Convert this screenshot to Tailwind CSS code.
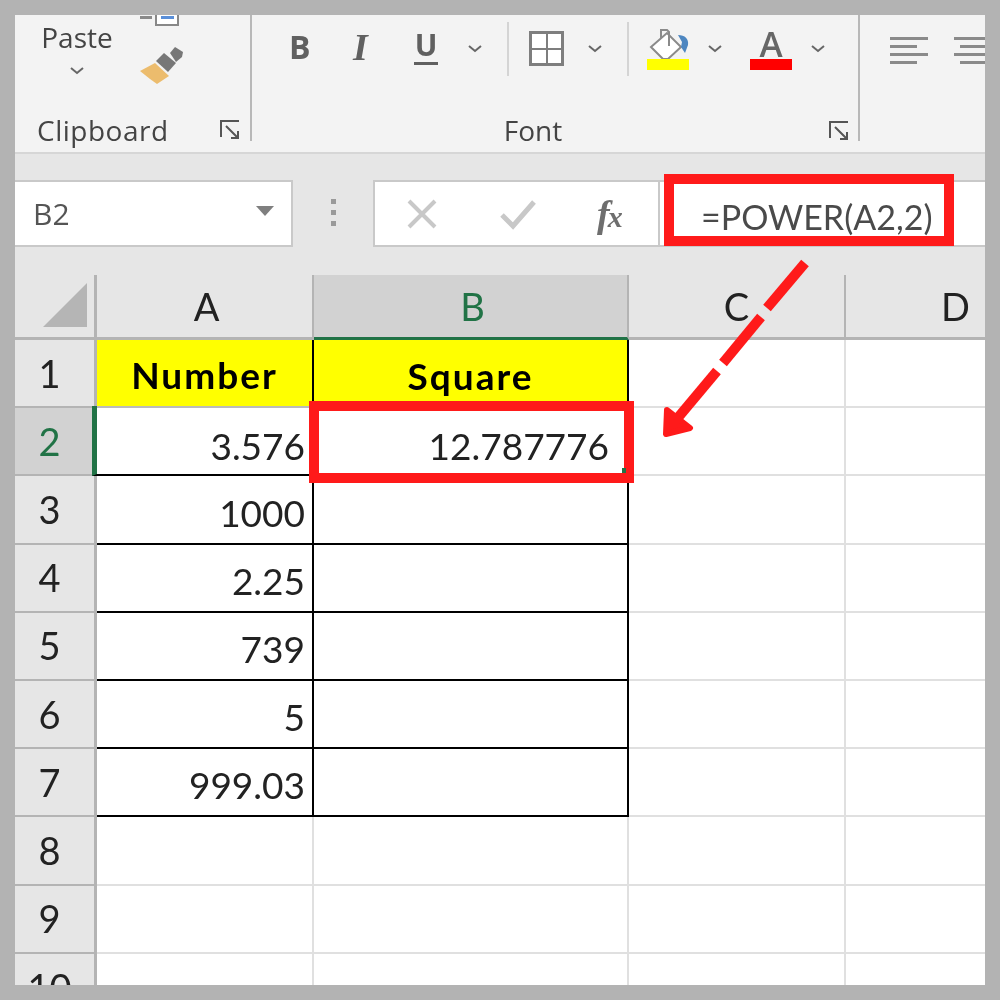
<!DOCTYPE html>
<html lang="en">

<head>
    <meta charset="UTF-8">
    <title>POWER function in Excel</title>
    <script src="https://cdn.jsdelivr.net/npm/@tailwindcss/browser@4"></script>
</head>

<body class="bg-[#b3b3b3]">
    <div class="relative w-[1000px] h-[1000px] p-[15px] bg-[#b3b3b3] overflow-hidden">
        <div class="w-[970px] h-[970px] overflow-hidden bg-white blur-[0.5px]">

            <!-- Ribbon -->
            <section class="flex h-[137px] bg-[#f3f3f3] font-['Open_Sans',sans-serif] text-[#444]">
                <!-- Clipboard -->
                <div class="relative flex flex-col w-[235px] shrink-0">
                    <div class="flex h-[97px]">
                        <div class="flex flex-col items-center w-[74px] ml-[25px] pt-[4px]">
                            <span class="text-[28px] leading-[36px]">Paste</span>
                            <svg class="w-[16px] h-[10px] mt-[11px]" viewBox="0 0 16 10" fill="none" stroke="#666" stroke-width="2"><path d="M2 2l6 5 6-5" /></svg>
                        </div>
                        <div class="flex flex-col ml-[26px]">
                            <div class="flex items-start gap-[3px]">
                                <div class="w-[12px] h-[3px] mt-[1px] bg-[#8a8a8a]"></div>
                                <div class="flex justify-center w-[24px] h-[11px] bg-white border-2 border-t-0 border-[#888]"><div class="w-[13px] h-[3px] mt-[1px] bg-[#5a8fd8]"></div></div>
                            </div>
                            <svg class="w-[44px] h-[38px] mt-[20px]" viewBox="0 0 44 38">
                                <path d="M0 25L15 17 29 30 17 38 10 33Z" fill="#ecbc6d" />
                                <path d="M16 15l8-8 12 10-8 9Z" fill="#777" />
                                <path d="M30 7l5-6 8 5-1 5-6 5Z" fill="#777" />
                            </svg>
                        </div>
                    </div>
                    <div class="flex items-start justify-between pl-[22px] pr-[9px]">
                        <span class="text-[28px] leading-[36px] tracking-[0.5px]">Clipboard</span>
                        <svg class="w-[22px] h-[22px] mt-[7px]" viewBox="0 0 22 22" fill="none" stroke="#555" stroke-width="2"><path d="M20 2H2v16M7 7l12 12M19 12v7h-7" /></svg>
                    </div>
                </div>
                <div class="w-[2px] h-[126px] bg-[#b8b8b8] shrink-0"></div>

                <!-- Font -->
                <div class="flex flex-col w-[606px] shrink-0">
                    <div class="flex items-center h-[67px]">
                        <span class="ml-[37px] mb-[4px] w-[20px] text-[32px] leading-none font-bold text-[#606060]">B</span>
                        <span class="ml-[44px] mb-[4px] w-[21px] text-[38px] leading-none font-bold italic font-['Liberation_Serif',serif] text-[#606060]">I</span>
                        <span class="ml-[40px] mb-[4px] w-[24px] text-[30px] leading-[34px] font-bold text-[#606060] border-b-[3px] border-[#606060] text-center">U</span>
                        <svg class="ml-[29px] w-[16px] h-[10px]" viewBox="0 0 16 10" fill="none" stroke="#666" stroke-width="2"><path d="M2 2l6 5 6-5" /></svg>
                        <div class="ml-[24px] w-[2px] h-[54px] bg-[#d4d4d4]"></div>
                        <div class="ml-[20px] grid grid-cols-2 w-[35px] h-[35px] bg-white border-[3px] border-[#7e7e7e]">
                            <div class="border-r-[1.5px] border-b-[1.5px] border-[#7e7e7e]"></div>
                            <div class="border-l-[1.5px] border-b-[1.5px] border-[#7e7e7e]"></div>
                            <div class="border-r-[1.5px] border-t-[1.5px] border-[#7e7e7e]"></div>
                            <div class="border-l-[1.5px] border-t-[1.5px] border-[#7e7e7e]"></div>
                        </div>
                        <svg class="ml-[23px] w-[16px] h-[10px]" viewBox="0 0 16 10" fill="none" stroke="#666" stroke-width="2"><path d="M2 2l6 5 6-5" /></svg>
                        <div class="ml-[24px] w-[2px] h-[54px] bg-[#d4d4d4]"></div>
                        <div class="flex flex-col ml-[18px] w-[42px]">
                            <svg class="w-[42px] h-[31px]" viewBox="0 0 42 31">
                                <path d="M4 19L20 5l14 14-13 12h-5Z" fill="#fff" stroke="#8a8a8a" stroke-width="2" />
                                <path d="M14 10V2h6l2 2v14" fill="none" stroke="#8a8a8a" stroke-width="2" />
                                <path d="M31 7c7 0 11 4 10 10l-3 8-4-6 1-5Z" fill="#4d86c0" />
                            </svg>
                            <div class="w-[42px] h-[11px] bg-[#ffff00]"></div>
                        </div>
                        <svg class="ml-[18px] w-[16px] h-[10px]" viewBox="0 0 16 10" fill="none" stroke="#666" stroke-width="2"><path d="M2 2l6 5 6-5" /></svg>
                        <div class="flex flex-col items-center ml-[27px] w-[42px]">
                            <span class="text-[35px] leading-[31px] font-semibold text-[#666]">A</span>
                            <div class="w-[42px] h-[11px] bg-[#ff0000]"></div>
                        </div>
                        <svg class="ml-[18px] w-[16px] h-[10px]" viewBox="0 0 16 10" fill="none" stroke="#666" stroke-width="2"><path d="M2 2l6 5 6-5" /></svg>
                    </div>
                    <div class="relative flex justify-center h-[66px] pt-[30px]">
                        <span class="mr-[44px] text-[28px] leading-[36px]">Font</span>
                        <svg class="absolute right-[8px] top-[38px] w-[22px] h-[22px]" viewBox="0 0 22 22" fill="none" stroke="#555" stroke-width="2"><path d="M20 2H2v16M7 7l12 12M19 12v7h-7" /></svg>
                    </div>
                </div>
                <div class="w-[2px] h-[126px] bg-[#b8b8b8] shrink-0"></div>

                <!-- Alignment -->
                <div class="flex gap-[26px] pl-[30px] pt-[22px]">
                    <div class="flex flex-col gap-[5px] w-[38px] shrink-0">
                        <div class="h-[3px] w-[38px] bg-[#8a8a8a]"></div>
                        <div class="h-[3px] w-[27px] bg-[#8a8a8a]"></div>
                        <div class="h-[3px] w-[38px] bg-[#8a8a8a]"></div>
                        <div class="h-[3px] w-[27px] bg-[#8a8a8a]"></div>
                    </div>
                    <div class="flex flex-col items-center gap-[5px] w-[38px] shrink-0">
                        <div class="h-[3px] w-[38px] bg-[#8a8a8a]"></div>
                        <div class="h-[3px] w-[27px] bg-[#8a8a8a]"></div>
                        <div class="h-[3px] w-[38px] bg-[#8a8a8a]"></div>
                        <div class="h-[3px] w-[27px] bg-[#8a8a8a]"></div>
                    </div>
                </div>
            </section>

            <!-- Formula bar -->
            <section class="h-[123px] bg-[#e6e6e6] border-t-2 border-[#d6d6d6] pt-[26px]">
                <div class="flex h-[67px]">
                    <div class="flex items-center justify-between w-[278px] pl-[18px] pr-[17px] bg-white border-2 border-l-0 border-[#c9c9c9]">
                        <span class="text-[30px] font-['Open_Sans',sans-serif] text-[#555]">B2</span>
                        <div class="w-0 h-0 border-x-[9px] border-t-[10px] border-x-transparent border-t-[#7f7f7f] mb-[6px]"></div>
                    </div>
                    <div class="flex flex-col items-center justify-center gap-[6px] w-[80px] pb-[3px]">
                        <div class="w-[5px] h-[5px] bg-[#9a9a9a]"></div>
                        <div class="w-[5px] h-[5px] bg-[#9a9a9a]"></div>
                        <div class="w-[5px] h-[5px] bg-[#9a9a9a]"></div>
                    </div>
                    <div class="flex items-center w-[287px] bg-white border-2 border-[#c9c9c9]">
                        <svg class="ml-[32px] w-[30px] h-[30px]" viewBox="0 0 30 30" fill="none" stroke="#c8c8c8" stroke-width="4"><path d="M2 2l26 26M28 2L2 28" /></svg>
                        <svg class="ml-[63px] w-[36px] h-[32px]" viewBox="0 0 36 32" fill="none" stroke="#c8c8c8" stroke-width="5"><path d="M2 17l11 11L34 4" /></svg>
                        <span class="ml-[61px] text-[38px] leading-none italic font-bold font-['Liberation_Serif',serif] text-[#6e6e6e] tracking-[-2px]">f<span class="text-[30px]">x</span></span>
                    </div>
                    <div class="flex-1 flex items-center pl-[41px] pt-[5px] bg-white border-y-2 border-[#c9c9c9]">
                        <span class="text-[34px] font-['Lato',sans-serif] text-[#4a4a4a]">=POWER(A2,2)</span>
                    </div>
                </div>
            </section>

            <!-- Sheet -->
            <section class="grid grid-cols-[82px_217px_315px_217px_139px] font-['Lato',sans-serif] text-[38px] text-[#222]">
                <!-- column headers -->
                <div class="flex items-center justify-end h-[65px] pr-[7px] bg-[#e6e6e6] border-r-[3px] border-b-[3px] border-[#b4b4b4]">
                    <div class="w-0 h-0 border-l-[44px] border-b-[44px] border-l-transparent border-b-[#b5b5b5] mt-[-2px]"></div>
                </div>
                <div class="flex items-center justify-center h-[65px] pl-[4px] bg-[#e6e6e6] border-r-2 border-b-[3px] border-[#b4b4b4]">A</div>
                <div class="flex items-center justify-center h-[65px] pl-[4px] bg-[#d2d2d2] border-r-2 border-[#b4b4b4] border-b-[3px] border-b-[#217346] text-[#217346]">B</div>
                <div class="flex items-center justify-center h-[65px] bg-[#e6e6e6] border-r-2 border-b-[3px] border-[#b4b4b4]">C</div>
                <div class="flex items-center h-[65px] pl-[95px] bg-[#e6e6e6] border-b-[3px] border-[#b4b4b4]">D</div>

                <!-- row 1 -->
                <div class="flex items-center justify-center h-[68.2px] pr-[10px] bg-[#e6e6e6] border-r-[3px] border-b-2 border-[#b4b4b4]">1</div>
                <div class="flex items-center justify-center h-[68.2px] pt-[4px] bg-[#ffff00] border-r-2 border-r-black border-b-2 border-b-[#bbbbbb] font-bold text-[37px] tracking-[2px] text-black">Number</div>
                <div class="flex items-center justify-center h-[68.2px] pt-[4px] bg-[#ffff00] border-r-2 border-black font-bold text-[37px] tracking-[2px] text-black">Square</div>
                <div class="h-[68.2px] border-r-2 border-b-2 border-[#e0e0e0]"></div>
                <div class="h-[68.2px] border-b-2 border-[#e0e0e0]"></div>

                <!-- row 2 -->
                <div class="flex items-center justify-center h-[68.2px] pr-[10px] bg-[#d2d2d2] border-r-[3px] border-b-2 border-[#b4b4b4] text-[#217346]">2</div>
                <div class="flex items-center justify-end h-[70.2px] mt-[-2px] pr-[7px] pt-[10px] ml-[-5px] text-[37px] border-l-[5px] border-l-[#217346] border-r-2 border-b-2 border-r-black border-b-black">3.576</div>
                <div class="flex items-center justify-end h-[68.2px] pr-[18px] pt-[6px] text-[37px] border-r-2 border-y-2 border-black">12.787776</div>
                <div class="h-[68.2px] border-r-2 border-b-2 border-[#e0e0e0]"></div>
                <div class="h-[68.2px] border-b-2 border-[#e0e0e0]"></div>

                <!-- row 3 -->
                <div class="flex items-center justify-center h-[68.2px] pr-[10px] bg-[#e6e6e6] border-r-[3px] border-b-2 border-[#b4b4b4]">3</div>
                <div class="flex items-center justify-end h-[68.2px] pr-[7px] pt-[6px] text-[37px] border-r-2 border-b-2 border-black">1000</div>
                <div class="h-[68.2px] border-r-2 border-b-2 border-black"></div>
                <div class="h-[68.2px] border-r-2 border-b-2 border-[#e0e0e0]"></div>
                <div class="h-[68.2px] border-b-2 border-[#e0e0e0]"></div>

                <!-- row 4 -->
                <div class="flex items-center justify-center h-[68.2px] pr-[10px] bg-[#e6e6e6] border-r-[3px] border-b-2 border-[#b4b4b4]">4</div>
                <div class="flex items-center justify-end h-[68.2px] pr-[7px] pt-[6px] text-[37px] border-r-2 border-b-2 border-black">2.25</div>
                <div class="h-[68.2px] border-r-2 border-b-2 border-black"></div>
                <div class="h-[68.2px] border-r-2 border-b-2 border-[#e0e0e0]"></div>
                <div class="h-[68.2px] border-b-2 border-[#e0e0e0]"></div>

                <!-- row 5 -->
                <div class="flex items-center justify-center h-[68.2px] pr-[10px] bg-[#e6e6e6] border-r-[3px] border-b-2 border-[#b4b4b4]">5</div>
                <div class="flex items-center justify-end h-[68.2px] pr-[7px] pt-[6px] text-[37px] border-r-2 border-b-2 border-black">739</div>
                <div class="h-[68.2px] border-r-2 border-b-2 border-black"></div>
                <div class="h-[68.2px] border-r-2 border-b-2 border-[#e0e0e0]"></div>
                <div class="h-[68.2px] border-b-2 border-[#e0e0e0]"></div>

                <!-- row 6 -->
                <div class="flex items-center justify-center h-[68.2px] pr-[10px] bg-[#e6e6e6] border-r-[3px] border-b-2 border-[#b4b4b4]">6</div>
                <div class="flex items-center justify-end h-[68.2px] pr-[7px] pt-[6px] text-[37px] border-r-2 border-b-2 border-black">5</div>
                <div class="h-[68.2px] border-r-2 border-b-2 border-black"></div>
                <div class="h-[68.2px] border-r-2 border-b-2 border-[#e0e0e0]"></div>
                <div class="h-[68.2px] border-b-2 border-[#e0e0e0]"></div>

                <!-- row 7 -->
                <div class="flex items-center justify-center h-[68.2px] pr-[10px] bg-[#e6e6e6] border-r-[3px] border-b-2 border-[#b4b4b4]">7</div>
                <div class="flex items-center justify-end h-[68.2px] pr-[7px] pt-[6px] text-[37px] border-r-2 border-b-2 border-black">999.03</div>
                <div class="h-[68.2px] border-r-2 border-b-2 border-black"></div>
                <div class="h-[68.2px] border-r-2 border-b-2 border-[#e0e0e0]"></div>
                <div class="h-[68.2px] border-b-2 border-[#e0e0e0]"></div>

                <!-- row 8 -->
                <div class="flex items-center justify-center h-[68.2px] pr-[10px] bg-[#e6e6e6] border-r-[3px] border-b-2 border-[#b4b4b4]">8</div>
                <div class="h-[68.2px] border-r-2 border-b-2 border-[#e0e0e0]"></div>
                <div class="h-[68.2px] border-r-2 border-b-2 border-[#e0e0e0]"></div>
                <div class="h-[68.2px] border-r-2 border-b-2 border-[#e0e0e0]"></div>
                <div class="h-[68.2px] border-b-2 border-[#e0e0e0]"></div>

                <!-- row 9 -->
                <div class="flex items-center justify-center h-[68.2px] pr-[10px] bg-[#e6e6e6] border-r-[3px] border-b-2 border-[#b4b4b4]">9</div>
                <div class="h-[68.2px] border-r-2 border-b-2 border-[#e0e0e0]"></div>
                <div class="h-[68.2px] border-r-2 border-b-2 border-[#e0e0e0]"></div>
                <div class="h-[68.2px] border-r-2 border-b-2 border-[#e0e0e0]"></div>
                <div class="h-[68.2px] border-b-2 border-[#e0e0e0]"></div>

                <!-- row 10 -->
                <div class="flex items-center justify-center h-[68.2px] pr-[10px] bg-[#e6e6e6] border-r-[3px] border-[#b4b4b4]">10</div>
                <div class="h-[68.2px] border-r-2 border-[#e0e0e0]"></div>
                <div class="h-[68.2px] border-r-2 border-[#e0e0e0]"></div>
                <div class="h-[68.2px] border-r-2 border-[#e0e0e0]"></div>
                <div class="h-[68.2px]"></div>
            </section>
        </div>

        <!-- red callouts over the sheet -->
        <div class="absolute left-[664px] top-[174px] w-[290px] h-[72px] border-[10px] border-[#ff1a1a]"></div>
        <div class="absolute left-[309px] top-[401px] w-[325px] h-[82px] border-[10px] border-[#ff1a1a]"></div>
        <div class="absolute left-[622px] top-[468px] w-[4px] h-[5px] bg-[#217346]"></div>
        <svg class="absolute left-0 top-0 w-[1000px] h-[1000px]" viewBox="0 0 1000 1000">
            <g stroke="#ff1a1a" stroke-width="10" fill="none">
                <path d="M805 263L767 308" />
                <path d="M761 317L723 363" />
                <path d="M717 371L676 420" />
            </g>
            <path d="M667 410L690 428 666 434Z" fill="#ff1a1a" stroke="#ff1a1a" stroke-width="6" stroke-linejoin="round" />
        </svg>
    </div>
</body>

</html>
